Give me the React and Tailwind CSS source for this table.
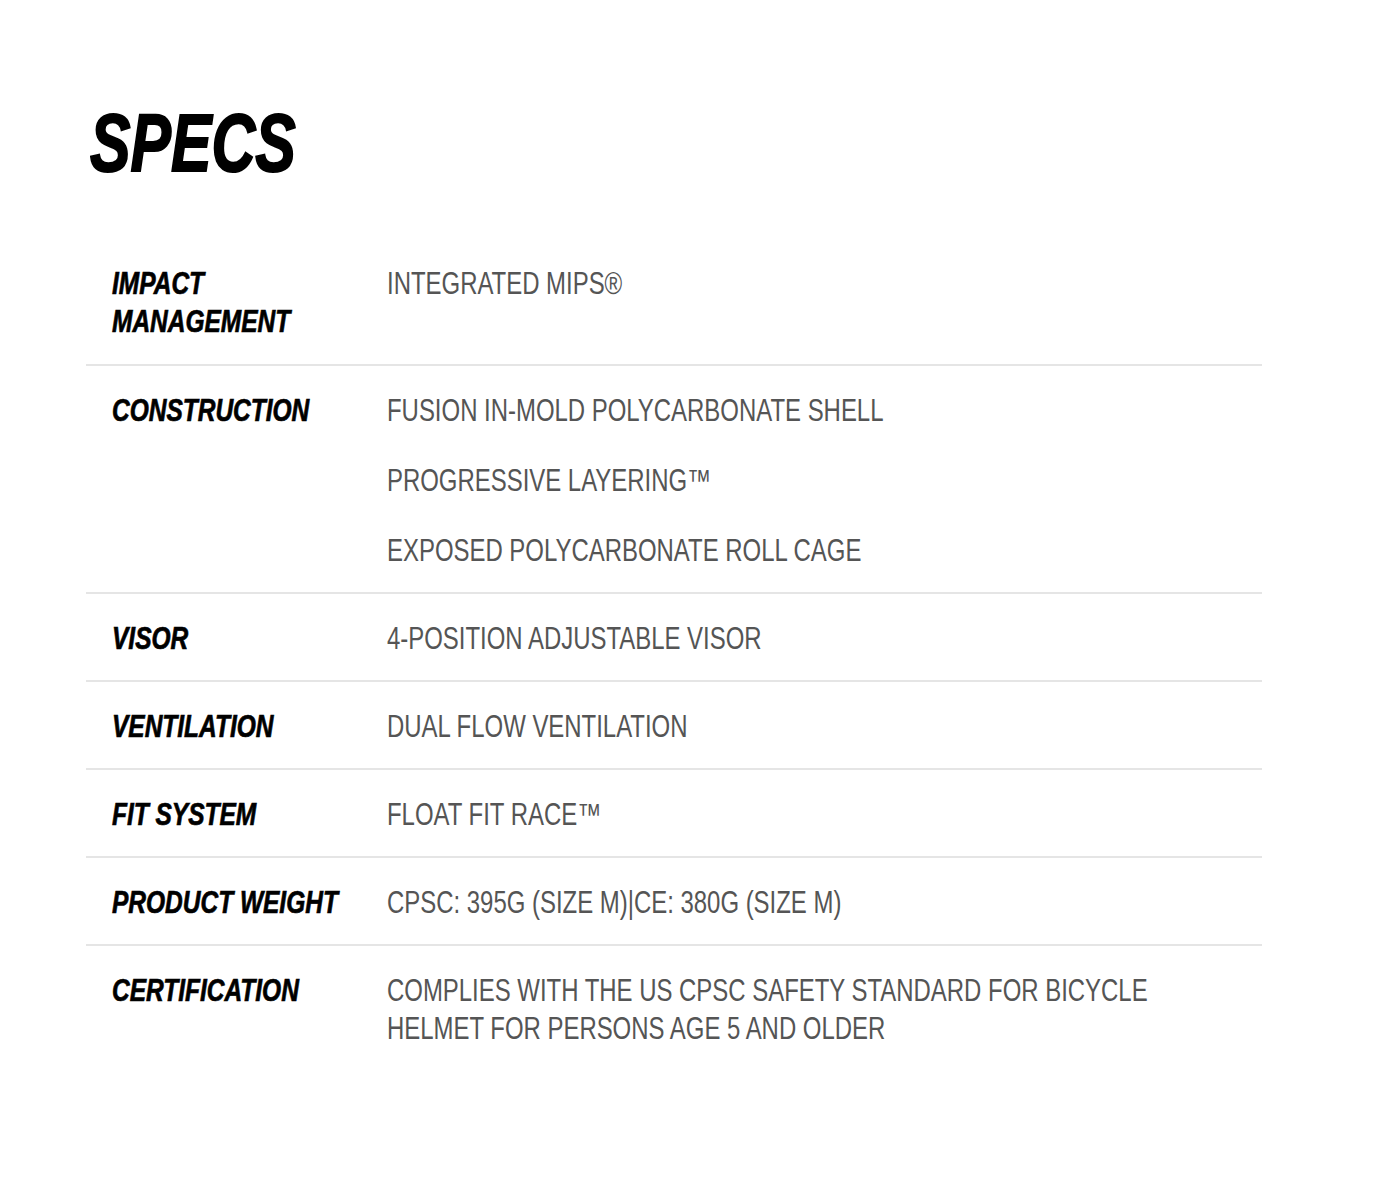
const specs = [
  { label: ["IMPACT", "MANAGEMENT"], values: ["INTEGRATED MIPS®"] },
  {
    label: ["CONSTRUCTION"],
    values: [
      "FUSION IN-MOLD POLYCARBONATE SHELL",
      "PROGRESSIVE LAYERING™",
      "EXPOSED POLYCARBONATE ROLL CAGE",
    ],
  },
  { label: ["VISOR"], values: ["4-POSITION ADJUSTABLE VISOR"] },
  { label: ["VENTILATION"], values: ["DUAL FLOW VENTILATION"] },
  { label: ["FIT SYSTEM"], values: ["FLOAT FIT RACE™"] },
  { label: ["PRODUCT WEIGHT"], values: ["CPSC: 395G (SIZE M)|CE: 380G (SIZE M)"] },
  {
    label: ["CERTIFICATION"],
    values: [
      "COMPLIES WITH THE US CPSC SAFETY STANDARD FOR BICYCLE HELMET FOR PERSONS AGE 5 AND OLDER",
    ],
  },
];

// the reference uses a condensed face; squeeze Liberation Sans horizontally
function SpecRow({ spec, first }) {
  return (
    <div
      className={
        "flex pl-[26px] " +
        (first ? "pt-[4px] pb-[23px]" : "pt-[26px] pb-[22px] border-t-2 border-[#e5e5e5]")
      }
    >
      <div className="w-[275px] shrink-0 text-[31px] leading-[38px] font-bold italic text-black [-webkit-text-stroke:0.7px_black]">
        {spec.label.map((l) => (
          <div key={l} className="w-[340px] origin-left scale-x-[0.79]">
            {l}
          </div>
        ))}
      </div>
      <div className="flex flex-col gap-[32px] text-[31px] leading-[38px] text-[#555555]">
        {spec.values.map((v) => (
          <p key={v} className="w-[1040px] origin-left scale-x-[0.772]">
            {v}
          </p>
        ))}
      </div>
    </div>
  );
}

export default function App() {
  return (
    <div
      className="min-h-[1204px] w-[1376px] overflow-hidden bg-white pt-[103px]"
      style={{ fontFamily: '"Liberation Sans", Arial, sans-serif' }}
    >
      <h1 className="pl-[90px] text-[82px] leading-[80px] font-bold italic text-black [-webkit-text-stroke:2px_black]">
        <div className="w-[300px] origin-left scale-x-[0.74]">SPECS</div>
      </h1>
      <div className="mt-[78px] ml-[86px] w-[1176px]">
        {specs.map((s, i) => (
          <SpecRow key={i} spec={s} first={i === 0} />
        ))}
      </div>
    </div>
  );
}
